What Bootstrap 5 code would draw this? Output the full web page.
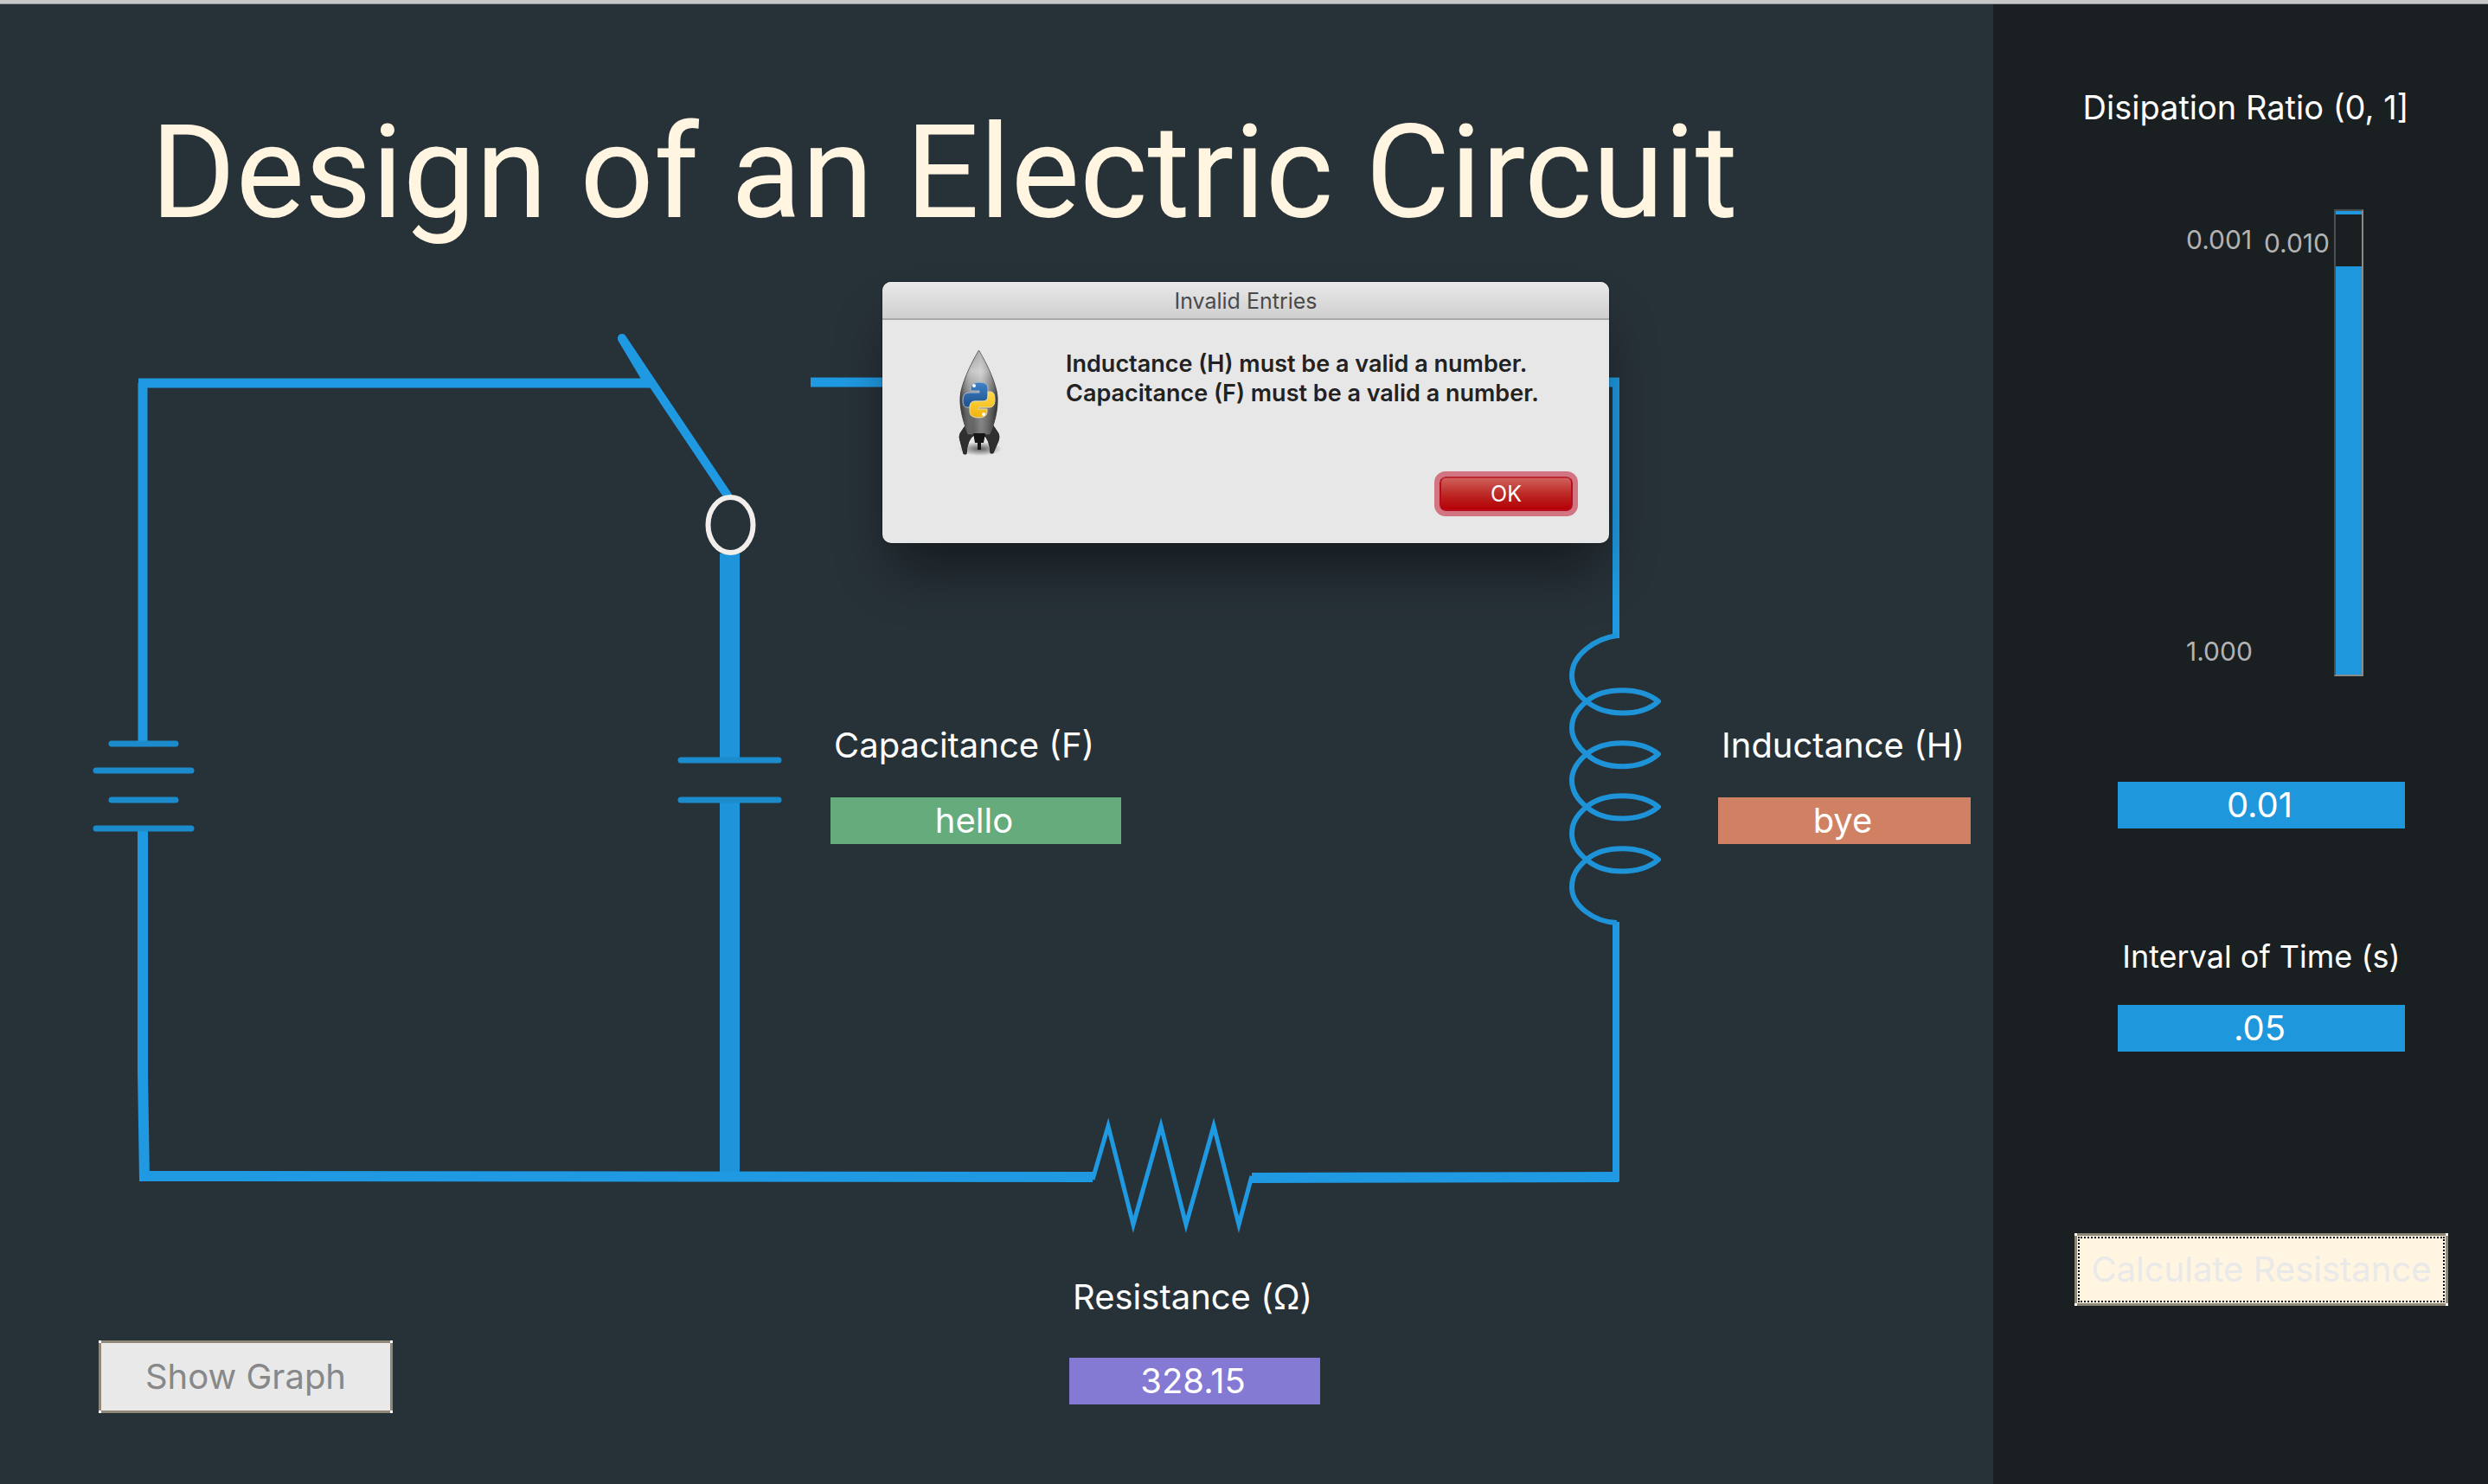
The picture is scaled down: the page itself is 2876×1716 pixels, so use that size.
<!DOCTYPE html>
<html lang="en">
<head>
<meta charset="utf-8">
<meta name="viewport" content="width=device-width, initial-scale=1">
<title>Design of an Electric Circuit</title>
<link href="https://cdn.jsdelivr.net/npm/bootstrap@5.3.0/dist/css/bootstrap.min.css" rel="stylesheet">
<script src="https://cdn.jsdelivr.net/npm/bootstrap@5.3.0/dist/js/bootstrap.bundle.min.js"></script>
<style>
  body { font-family: Inter, "Open Sans", sans-serif; background: #273138; color: #fff; overflow-x: hidden; }
  .window-edge { height: 5px; background: #c8c8c8; border-bottom: 1px solid #8f9294; }
  .app-title { font-family: Roboto, "Liberation Sans", sans-serif; font-size: 150px; line-height: 200px; padding: 95px 0 0 174px; color: #fff5e1; white-space: nowrap; }

  .schematic { aspect-ratio: 2304 / 1416; }
  .pin { left: calc(var(--x) / 2304 * 100%); top: calc(var(--y) / 1416 * 100%); }
  .pin-cap { --x: 960; --y: 535; width: 336px; }
  .pin-ind { --x: 1986; --y: 535; width: 292px; }
  .pin-res { --x: 1236; --y: 1173; width: 290px; }
  .pin-graph { --x: 114; --y: 1250; width: 340px; }

  .field-label { font-size: 40px; line-height: 54px; white-space: nowrap; }
  .side-label { font-size: 38px; line-height: 48px; white-space: nowrap; }
  .time-label { font-size: 36px; }
  .entry { height: 54px; padding: 0 4px 0 0; border: 0; border-radius: 0; text-align: center; color: #fff; font-size: 40px; line-height: 54px; }
  .entry-green { background: #66ab7c; }
  .entry-orange { background: #d08163; }
  .entry-violet { background: #8479d3; }
  .entry-blue { background: #1f97dc; width: 332px; }
  .gap-field { gap: 33px; }
  .gap-result { gap: 43px; }

  .tk-btn { --face: #e9e9e9; height: 84px; padding: 0; border: 0; font-size: 40px; line-height: 84px; white-space: nowrap;
    background:
      linear-gradient(#fff, #fff) 0 0 / 3px 3px no-repeat,
      linear-gradient(#fff, #fff) 100% 0 / 3px 3px no-repeat,
      linear-gradient(#fff, #fff) 0 100% / 3px 3px no-repeat,
      linear-gradient(#fff, #fff) 100% 100% / 3px 3px no-repeat,
      linear-gradient(var(--face), var(--face)) 50% 50% / calc(100% - 6px) calc(100% - 6px) no-repeat,
      #8f8879; }
  .tk-btn-graph { color: #888; }
  .tk-btn-calc { --face: #fff5e1; color: #e9e9e9; width: 432px; outline: 2px dotted #000; outline-offset: -6px; }

  .side { width: 572px; background: #1a1f22; padding: 95px 0 0 48px; }
  .label-ratio { margin-right: 36px; }
  .scale-row { width: 332px; height: 540px; margin: 94px 0 122px; padding-right: 48px; }
  .scale-text { font-size: 30px; line-height: 36px; color: #b3b3b3; }
  .scale-ends { padding: 17px 0 11px; margin-right: 13px; }
  .scale-value { padding-top: 21px; margin-right: 5px; }
  .scale-box { width: 34px; height: 540px; }
  .scale-range { -webkit-appearance: none; appearance: none; flex: none; width: 540px; height: 34px; margin: 0; transform: rotate(90deg);
    background: #1f97dc; border: 2px solid #8a8a8a; border-left-color: #4b4f51; border-bottom-color: #4b4f51; }
  .scale-range::-webkit-slider-thumb { -webkit-appearance: none; appearance: none; width: 60px; height: 30px; background: #1a1f22; border: 0; border-radius: 0; }
  .scale-range::-moz-range-thumb { width: 60px; height: 30px; background: #1a1f22; border: 0; border-radius: 0; }
  .gap-before-time { margin-top: 124px; }
  .gap-time { margin-top: 32px; }
  .gap-before-calc { margin-top: 210px; }

  .alert-window { left: 35.466%; top: 326px; width: 840px; border-radius: 10px; background: #e7e7e7; color: #222; overflow: hidden; }
  .alert-shadow { box-shadow: 0 40px 60px -12px rgba(0,0,0,.45), 0 0 2px rgba(0,0,0,.6); }
  .alert-bar { height: 44px; line-height: 45px; font-size: 25px; color: #4a4a4a; background: linear-gradient(#e9e9e9, #cfcfcf); border-bottom: 2px solid #a9a9a9; }
  .alert-main { padding: 34px 36px 0 88px; }
  .alert-text { font-size: 27px; line-height: 34px; font-weight: 600; margin: 0 0 0 74px; white-space: nowrap; }
  .alert-foot { padding: 23px 42px 37px; }
  .rocket { width: 50px; height: 124px; flex: none; }
  .ok-btn { width: 154px; height: 40px; padding: 0; border: 2px solid #b50d1c; border-top-color: #b92834; border-radius: 7px; color: #fff; font-size: 25px; line-height: 36px;
    background: linear-gradient(#d0605b, #bd2a26 50%, #b50005); box-shadow: 0 0 0 6px #d37483; }
</style>
</head>
<body>
<div class="window-edge"></div>
<div class="d-flex align-items-stretch">
  <main class="flex-grow-1">
    <h1 class="app-title fw-normal m-0">Design of an Electric Circuit</h1>
    <section class="schematic position-relative">
      <svg class="d-block w-100 h-100" viewBox="0 300 2304 1416" fill="none" stroke="#1f9ae2" aria-hidden="true">
        <!-- battery branch -->
        <path stroke-width="11" d="M165 860V443"/>
        <path stroke-width="11" d="M160 443H752"/>
        <path stroke-width="12" d="M165 958V1240L167 1364"/>
        <g stroke-width="7" stroke-linecap="round" stroke="#1c8bcb">
          <path d="M129 860h74M111 891h110M129 925h74M111 958h110"/>
        </g>
        <!-- switch and capacitor branch -->
        <path stroke-width="10" stroke-linecap="round" d="M719 391L841 573"/>
        <path fill="#1f9ae2" stroke="none" d="M714 393L742 440L762 450L722 388z"/>
        <path stroke-width="23" stroke="#1e95da" d="M843.500 640V878M843.500 925V1360"/>
        <path stroke-width="7" stroke-linecap="round" stroke="#1c8bcb" d="M787 879h113M787 925h113"/>
        <ellipse cx="844.500" cy="607" rx="26" ry="32" stroke="#f1eeec" stroke-width="6"/>
        <!-- inductor branch -->
        <path stroke-width="11" d="M937 442H1872"/>
        <path stroke-width="8" d="M1868 437V738M1868 1066V1366"/>
        <path stroke-width="6" stroke="#1e93d7" stroke-linejoin="round" d="M1869 735C1846 738 1817 756 1817 781C1817 795 1825 804 1834 811C1854 828 1896 830 1917 811C1896 794 1854 794 1834 811C1822 821 1817 830 1817 842C1817 854 1825 865 1834 872C1854 891 1896 891 1917 872C1896 855 1854 855 1834 872C1822 882 1817 891 1817 902C1817 915 1825 926 1834 933C1854 951 1896 951 1917 933C1896 916 1854 916 1834 933C1822 943 1817 952 1817 964C1817 977 1825 987 1834 994C1854 1012 1896 1012 1917 994C1896 977 1854 977 1834 994C1822 1004 1817 1013 1817 1026C1817 1047 1842 1066 1869 1067"/>
        <!-- resistor branch -->
        <path stroke-width="12" d="M161 1360L1263 1361M1447 1362L1871 1361"/>
        <path stroke-width="5" stroke-miterlimit="4" d="M1263 1364L1281 1302L1310 1416L1342 1302L1371 1416L1403 1302L1432 1416L1447 1360"/>
      </svg>

      <div class="pin pin-cap position-absolute d-flex flex-column gap-field">
        <label class="field-label ps-1" for="capacitance">Capacitance (F)</label>
        <input class="entry entry-green w-100" id="capacitance" type="text" value="hello">
      </div>
      <div class="pin pin-ind position-absolute d-flex flex-column gap-field">
        <label class="field-label ps-1" for="inductance">Inductance (H)</label>
        <input class="entry entry-orange w-100" id="inductance" type="text" value="bye">
      </div>
      <div class="pin pin-res position-absolute d-flex flex-column gap-result">
        <label class="field-label ps-1" for="resistance">Resistance (Ω)</label>
        <input class="entry entry-violet w-100" id="resistance" type="text" value="328.15">
      </div>
      <button class="pin pin-graph tk-btn tk-btn-graph position-absolute" type="button">Show Graph</button>
    </section>
  </main>

  <aside class="side d-flex flex-column align-items-center flex-shrink-0">
    <label class="side-label label-ratio" for="ratio-scale">Disipation Ratio (0, 1]</label>
    <div class="scale-row d-flex justify-content-end">
      <div class="scale-text scale-ends d-flex flex-column justify-content-between"><span>0.001</span><span>1.000</span></div>
      <output class="scale-text scale-value" for="ratio-scale">0.010</output>
      <div class="scale-box d-flex align-items-center justify-content-center">
        <input class="scale-range" id="ratio-scale" type="range" min="0.001" max="1" step="0.001" value="0.01">
      </div>
    </div>
    <input class="entry entry-blue" id="ratio" type="text" value="0.01" aria-label="Disipation ratio value">
    <label class="side-label time-label gap-before-time" for="interval">Interval of Time (s)</label>
    <input class="entry entry-blue gap-time" id="interval" type="text" value=".05">
    <button class="tk-btn tk-btn-calc gap-before-calc" type="button">Calculate Resistance</button>
  </aside>
</div>

<div class="alert-window alert-shadow position-absolute" role="alertdialog" aria-labelledby="alert-title" aria-describedby="alert-text">
  <div class="alert-bar text-center" id="alert-title">Invalid Entries</div>
  <div class="alert-main d-flex align-items-start">
    <svg class="rocket" viewBox="0 0 50 124" aria-hidden="true">
      <defs>
        <linearGradient id="hull" x1="0" y1="0" x2="0" y2="1"><stop offset="0" stop-color="#8d8d8d"/><stop offset=".25" stop-color="#c2c2c2"/><stop offset=".5" stop-color="#8a8a8a"/><stop offset=".75" stop-color="#555"/><stop offset="1" stop-color="#4a4a4a"/></linearGradient>
        <linearGradient id="shade"><stop offset="0" stop-color="#000" stop-opacity=".5"/><stop offset=".35" stop-color="#fff" stop-opacity=".12"/><stop offset=".55" stop-color="#fff" stop-opacity=".3"/><stop offset="1" stop-color="#000" stop-opacity=".5"/></linearGradient>
        <linearGradient id="snake-b" x1="0" y1="0" x2="0" y2="1"><stop offset="0" stop-color="#3f83c6"/><stop offset="1" stop-color="#1f4f8a"/></linearGradient>
        <linearGradient id="snake-y" x1="0" y1="0" x2="0" y2="1"><stop offset="0" stop-color="#ffd943"/><stop offset="1" stop-color="#f0b411"/></linearGradient>
        <radialGradient id="ground"><stop offset="0" stop-color="#000" stop-opacity=".6"/><stop offset="1" stop-color="#000" stop-opacity="0"/></radialGradient>
      </defs>
      <ellipse cx="25" cy="115" rx="25" ry="8" fill="url(#ground)"/>
      <path d="M8 88L2 97Q0 101 2 106L6 121H9Q10 104 18 99L14 88zM40 88L46 97Q48 101 46 106L40 120H37Q36 104 29 99L34 88z" fill="#303030" stroke="#252525"/>
      <path d="M23.500 1C14 17 3 40 2 55C1 70 7 88 11 98H36C41 88 46 70 45 55C44 40 33 17 23.500 1z" fill="url(#hull)" stroke="#555"/>
      <path d="M23.500 1C14 17 3 40 2 55C1 70 7 88 11 98H36C41 88 46 70 45 55C44 40 33 17 23.500 1z" fill="url(#shade)"/>
      <path d="M17 97h14l-2 11h-3v8h-4v-8h-3z" fill="#151515"/>
      <path d="M14 45Q14 38 24 38Q34 38 34 45V54Q34 60 28 60H19Q13 60 13 67H10Q5 67 5 59Q5 50 12 50H24V48H14z" fill="url(#snake-b)" stroke="#a9b8c8" stroke-width="1"/>
      <path d="M34 49H37Q42 49 42 58Q42 67 36 67H23V69H33V72Q33 79 23 79Q13 79 13 72V67Q13 60 19 60H28Q34 60 34 54z" fill="url(#snake-y)" stroke="#e6dcae" stroke-width="1"/>
      <circle cx="18" cy="42" r="2" fill="#fff"/><circle cx="29" cy="75" r="2" fill="#fff"/>
    </svg>
    <p class="alert-text" id="alert-text">Inductance (H) must be a valid a number.<br>Capacitance (F) must be a valid a number.</p>
  </div>
  <div class="alert-foot d-flex justify-content-end"><button class="ok-btn" type="button">OK</button></div>
</div>
</body>
</html>
